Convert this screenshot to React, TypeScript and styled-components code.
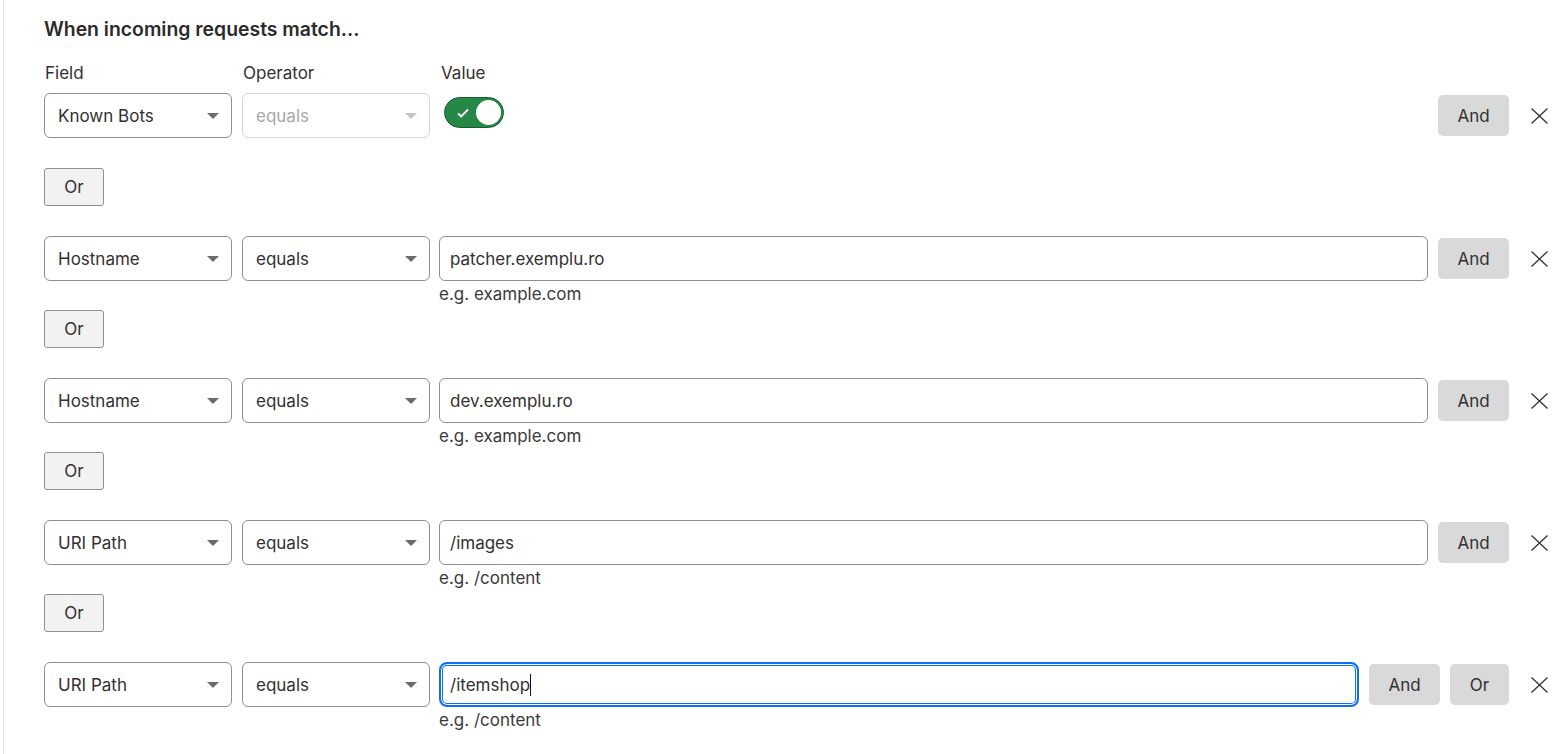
import styled, { createGlobalStyle } from 'styled-components'
import type { FunctionComponent } from 'react'

const GlobalStyle = createGlobalStyle`
  body {
    margin: 0;
    background: #ffffff;
    color: #313131;
    font-family: Inter, "Noto Sans", "Liberation Sans", sans-serif;
  }
`

const Page = styled.main`
  margin-left: 3px;
  min-height: 754px;
  border-left: 1px solid #e6e6e6;
  padding: 16px 7px 0 40px;
  box-sizing: border-box;
`

const Title = styled.h2`
  margin: 0;
  font-size: 19.4px;
  line-height: 26px;
  font-weight: 600;
  color: #2b2b2b;
`

const Labels = styled.div`
  display: flex;
  gap: 10px;
  margin-top: 21px;
  font-size: 17px;
  line-height: 20px;
  padding-left: 1px;
`

const Label = styled.span<{ $width?: number }>`
  width: ${({ $width }) => ($width ? `${$width}px` : 'auto')};
  flex: ${({ $width }) => ($width ? 'none' : '1')};
`

const Block = styled.section`
  display: flex;
  flex-direction: column;
  align-items: flex-start;
  margin-top: 10px;

  & + & {
    margin-top: 30px;
  }
`

const Row = styled.div`
  display: flex;
  align-items: flex-start;
  gap: 10px;
  width: 100%;
`

const Select = styled.div<{ $disabled?: boolean }>`
  position: relative;
  display: flex;
  align-items: center;
  width: 188px;
  height: 45px;
  box-sizing: border-box;
  padding: 0 34px 0 13px;
  border: 1px solid ${({ $disabled }) => ($disabled ? '#d6d6d6' : '#8f8f8f')};
  border-radius: 6px;
  font-size: 17px;
  color: ${({ $disabled }) => ($disabled ? '#a8a8a8' : '#313131')};
  flex: none;
`

const Arrow = styled.span<{ $disabled?: boolean }>`
  position: absolute;
  right: 12px;
  top: 19px;
  border-left: 6px solid transparent;
  border-right: 6px solid transparent;
  border-top: 6px solid ${({ $disabled }) => ($disabled ? '#c4c4c4' : '#6b6b6b')};
`

const ValueColumn = styled.div`
  flex: 1;
  display: flex;
  flex-direction: column;
  min-width: 0;
  margin-left: -1px;
`

const ValueBox = styled.div<{ $focused?: boolean }>`
  display: flex;
  align-items: center;
  height: 45px;
  box-sizing: border-box;
  padding: 0 ${({ $focused }) => ($focused ? '9px' : '10px')};
  border: ${({ $focused }) => ($focused ? '2px solid #0b6ff7' : '1px solid #8f8f8f')};
  border-radius: ${({ $focused }) => ($focused ? '8px' : '6px')};
  box-shadow: ${({ $focused }) =>
    $focused ? 'inset 0 0 0 1px #ffffff, inset 0 0 0 2px #0b6ff7' : 'none'};
  font-size: 17px;
  color: #313131;
`

const Caret = styled.span`
  display: inline-block;
  width: 1px;
  height: 22px;
  background: #111111;
`

const Helper = styled.div`
  margin-top: 3px;
  font-size: 17px;
  line-height: 20px;
  color: #3a3a3a;
`

const Toggle = styled.div`
  position: relative;
  margin: 4px 0 0 5px;
  width: 60px;
  height: 31px;
  box-sizing: border-box;
  border: 1px solid #1a5c31;
  border-radius: 16px;
  background: #258847;
`

const Knob = styled.span`
  position: absolute;
  right: 2px;
  top: 2px;
  width: 25px;
  height: 25px;
  border-radius: 50%;
  background: #ffffff;
`

const Check = styled.svg`
  position: absolute;
  left: 11px;
  top: 9px;
`

const ActionButton = styled.button<{ $width: number }>`
  margin-top: 2px;
  width: ${({ $width }) => $width}px;
  height: 41px;
  flex: none;
  border: none;
  border-radius: 5px;
  background: #d9d9d9;
  color: #313131;
  font-family: inherit;
  font-size: 17px;
`

const CloseButton = styled.button`
  margin-left: 5px;
  width: 30px;
  height: 45px;
  flex: none;
  border: none;
  background: transparent;
  padding: 0;
  display: flex;
  align-items: center;
  justify-content: center;
  color: #333333;
`

const OrButton = styled.button<{ $afterHelper?: boolean }>`
  margin-top: ${({ $afterHelper }) => ($afterHelper ? '6px' : '30px')};
  width: 60px;
  height: 38px;
  border: 1px solid #8f8f8f;
  border-radius: 3px;
  background: #f2f2f2;
  color: #313131;
  font-family: inherit;
  font-size: 17px;
`

const CloseIcon = () => (
  <svg width="17" height="16" viewBox="0 0 17 16" fill="none">
    <path d="M0.5 0.5l16 15M16.5 0.5l-16 15" stroke="currentColor" strokeWidth="1.3" />
  </svg>
)

type Rule = {
  field: string
  value: string
  helper: string
  focused?: boolean
}

const rules: Rule[] = [
  { field: 'Hostname', value: 'patcher.exemplu.ro', helper: 'e.g. example.com' },
  { field: 'Hostname', value: 'dev.exemplu.ro', helper: 'e.g. example.com' },
  { field: 'URI Path', value: '/images', helper: 'e.g. /content' },
  { field: 'URI Path', value: '/itemshop', helper: 'e.g. /content', focused: true },
]

const App: FunctionComponent = () => (
  <>
    <GlobalStyle />
    <Page>
      <Title>When incoming requests match...</Title>

      <Labels>
        <Label $width={188}>Field</Label>
        <Label $width={188}>Operator</Label>
        <Label>Value</Label>
      </Labels>

      <Block>
        <Row>
          <Select>
            Known Bots
            <Arrow />
          </Select>
          <Select $disabled>
            equals
            <Arrow $disabled />
          </Select>
          <ValueColumn>
            <Toggle>
              <Check width="14" height="12" viewBox="0 0 14 12" fill="none">
                <path d="M2 6.5l3.2 3L12 2.5" stroke="#ffffff" strokeWidth="1.8" />
              </Check>
              <Knob />
            </Toggle>
          </ValueColumn>
          <ActionButton $width={71}>And</ActionButton>
          <CloseButton aria-label="Remove">
            <CloseIcon />
          </CloseButton>
        </Row>
        <OrButton>Or</OrButton>
      </Block>

      {rules.map((rule, index) => (
        <Block key={index}>
          <Row>
            <Select>
              {rule.field}
              <Arrow />
            </Select>
            <Select>
              equals
              <Arrow />
            </Select>
            <ValueColumn>
              <ValueBox $focused={rule.focused}>
                {rule.value}
                {rule.focused && <Caret />}
              </ValueBox>
              <Helper>{rule.helper}</Helper>
            </ValueColumn>
            <ActionButton $width={71}>And</ActionButton>
            {rule.focused && <ActionButton $width={59}>Or</ActionButton>}
            <CloseButton aria-label="Remove">
              <CloseIcon />
            </CloseButton>
          </Row>
          {!rule.focused && <OrButton $afterHelper>Or</OrButton>}
        </Block>
      ))}
    </Page>
  </>
)

export default App
